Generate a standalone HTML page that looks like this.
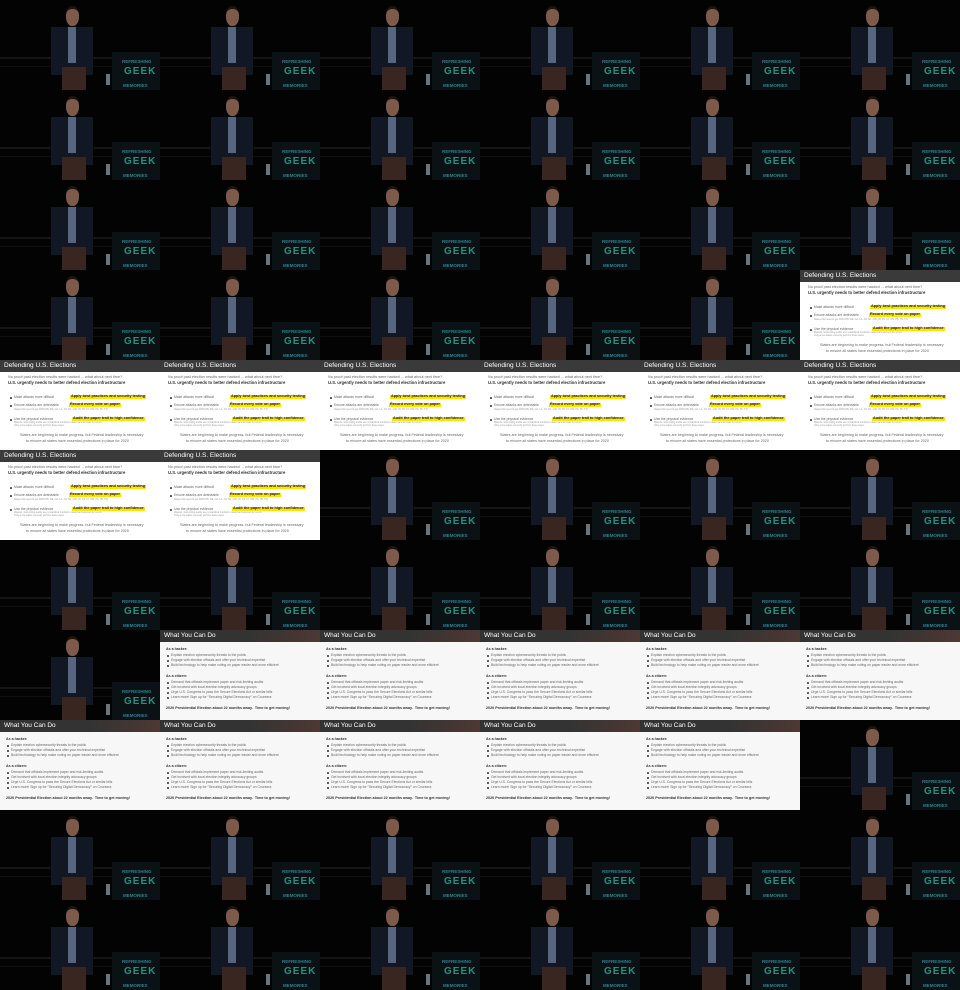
<!DOCTYPE html>
<html><head><meta charset="utf-8"><style>
*{margin:0;padding:0;box-sizing:border-box}
body{width:960px;height:990px;background:#000;overflow:hidden;font-family:"Liberation Sans",sans-serif}
.g{display:grid;grid-template-columns:repeat(6,160px);grid-auto-rows:90px}
.c{position:relative;width:160px;height:90px;overflow:hidden}
.s{background:
 linear-gradient(#566680,#566680) 68px 27px/8px 36px no-repeat,
 linear-gradient(#3a2620,#3a2620) 62px 67px/24px 23px no-repeat,
 linear-gradient(#121724,#121724) 51px 27px/42px 48px no-repeat,
 linear-gradient(#0a1215,#0a1215) 112px 52px/48px 38px no-repeat,
 linear-gradient(#6a747a,#6a747a) 106px 74px/4px 11px no-repeat,
 linear-gradient(#151515,#151515) 0 57px/112px 2px no-repeat,
 linear-gradient(#0e0e0e,#0e0e0e) 0 66px/112px 1px no-repeat,
 #030303}
.s::before{content:"";position:absolute;left:66px;top:6px;width:13px;height:17px;background:#7d5a4a;border-radius:45%;border-top:3px solid #1e140e}
.s b,.s u,.s em{position:absolute;font-weight:bold;font-style:normal;text-decoration:none;white-space:nowrap}
.s b{left:122px;top:59px;font-size:4.5px;color:#2e7f93}
.s u{left:124px;top:66px;font-size:10px;color:#2c8f7e;letter-spacing:1px}
.s em{left:123px;top:83px;font-size:4.5px;color:#2e7f93}
.d,.w{background:#fff;font-size:3.4px;color:#666;line-height:1}
.w{background:#f7f7f7}
.h{height:12px;background:#3a3a3a;color:#fff;font-size:6.5px;padding:3px 0 0 4px;white-space:nowrap}
.w .h{background:linear-gradient(90deg,#333 0,#333 55%,#4d3833 100%)}
.d p,.w p{position:absolute;white-space:nowrap}
.k{font-weight:bold;color:#333;font-size:4.2px}
.y{background:#fbe500;color:#222;font-weight:bold;font-size:3.8px;padding:0 1px}
.sm{font-size:2.4px;color:#999}
.d p.dt::before,.w p.dt::before{content:"";position:absolute;left:-4px;top:1px;width:1.6px;height:1.6px;background:#444;border-radius:50%}
</style></head><body><div class="g">
<div class="c s"><b>REFRESHING</b><u>GEEK</u><em>MEMORIES</em></div>
<div class="c s"><b>REFRESHING</b><u>GEEK</u><em>MEMORIES</em></div>
<div class="c s"><b>REFRESHING</b><u>GEEK</u><em>MEMORIES</em></div>
<div class="c s"><b>REFRESHING</b><u>GEEK</u><em>MEMORIES</em></div>
<div class="c s"><b>REFRESHING</b><u>GEEK</u><em>MEMORIES</em></div>
<div class="c s"><b>REFRESHING</b><u>GEEK</u><em>MEMORIES</em></div>

<div class="c s"><b>REFRESHING</b><u>GEEK</u><em>MEMORIES</em></div>
<div class="c s"><b>REFRESHING</b><u>GEEK</u><em>MEMORIES</em></div>
<div class="c s"><b>REFRESHING</b><u>GEEK</u><em>MEMORIES</em></div>
<div class="c s"><b>REFRESHING</b><u>GEEK</u><em>MEMORIES</em></div>
<div class="c s"><b>REFRESHING</b><u>GEEK</u><em>MEMORIES</em></div>
<div class="c s"><b>REFRESHING</b><u>GEEK</u><em>MEMORIES</em></div>

<div class="c s"><b>REFRESHING</b><u>GEEK</u><em>MEMORIES</em></div>
<div class="c s"><b>REFRESHING</b><u>GEEK</u><em>MEMORIES</em></div>
<div class="c s"><b>REFRESHING</b><u>GEEK</u><em>MEMORIES</em></div>
<div class="c s"><b>REFRESHING</b><u>GEEK</u><em>MEMORIES</em></div>
<div class="c s"><b>REFRESHING</b><u>GEEK</u><em>MEMORIES</em></div>
<div class="c s"><b>REFRESHING</b><u>GEEK</u><em>MEMORIES</em></div>

<div class="c s"><b>REFRESHING</b><u>GEEK</u><em>MEMORIES</em></div>
<div class="c s"><b>REFRESHING</b><u>GEEK</u><em>MEMORIES</em></div>
<div class="c s"><b>REFRESHING</b><u>GEEK</u><em>MEMORIES</em></div>
<div class="c s"><b>REFRESHING</b><u>GEEK</u><em>MEMORIES</em></div>
<div class="c s"><b>REFRESHING</b><u>GEEK</u><em>MEMORIES</em></div>
<div class="c d"><div class="h">Defending U.S. Elections</div><p style="left:8px;top:16px;font-size:3.8px">No proof past election results were hacked ... what about next time?</p><p class="k" style="left:8px;top:21px">U.S. urgently needs to better defend election infrastructure</p><p class="dt" style="left:14px;top:36px">Make attacks more difficult</p><p class="y" style="left:70px;top:35px">Apply best practices and security testing</p><p class="dt" style="left:14px;top:44px">Ensure attacks are detectable</p><p class="y" style="left:69px;top:43px">Record every vote on paper</p><p class="sm" style="left:14px;top:49px">States that need to get 100% PB: DE, GA, LA, NJ, SC, (AR, IN, KS, KY, MS, PA, TN, TX)</p><p class="dt" style="left:14px;top:58px">Use the physical evidence</p><p class="y" style="left:72px;top:57px">Audit the paper trail to high confidence</p><p class="sm" style="left:14px;top:62px">Manual, risk-limiting audits use a statistical method to detect and account for errors</p><p class="sm" style="left:14px;top:65px">Only a few states currently perform these steps</p><p style="left:20px;top:74px;font-size:3.7px">States are beginning to make progress, but Federal leadership is necessary</p><p style="left:26px;top:80px;font-size:3.7px">to ensure all states have essential protections in place for 2020</p></div>

<div class="c d"><div class="h">Defending U.S. Elections</div><p style="left:8px;top:16px;font-size:3.8px">No proof past election results were hacked ... what about next time?</p><p class="k" style="left:8px;top:21px">U.S. urgently needs to better defend election infrastructure</p><p class="dt" style="left:14px;top:36px">Make attacks more difficult</p><p class="y" style="left:70px;top:35px">Apply best practices and security testing</p><p class="dt" style="left:14px;top:44px">Ensure attacks are detectable</p><p class="y" style="left:69px;top:43px">Record every vote on paper</p><p class="sm" style="left:14px;top:49px">States that need to get 100% PB: DE, GA, LA, NJ, SC, (AR, IN, KS, KY, MS, PA, TN, TX)</p><p class="dt" style="left:14px;top:58px">Use the physical evidence</p><p class="y" style="left:72px;top:57px">Audit the paper trail to high confidence</p><p class="sm" style="left:14px;top:62px">Manual, risk-limiting audits use a statistical method to detect and account for errors</p><p class="sm" style="left:14px;top:65px">Only a few states currently perform these steps</p><p style="left:20px;top:74px;font-size:3.7px">States are beginning to make progress, but Federal leadership is necessary</p><p style="left:26px;top:80px;font-size:3.7px">to ensure all states have essential protections in place for 2020</p></div>
<div class="c d"><div class="h">Defending U.S. Elections</div><p style="left:8px;top:16px;font-size:3.8px">No proof past election results were hacked ... what about next time?</p><p class="k" style="left:8px;top:21px">U.S. urgently needs to better defend election infrastructure</p><p class="dt" style="left:14px;top:36px">Make attacks more difficult</p><p class="y" style="left:70px;top:35px">Apply best practices and security testing</p><p class="dt" style="left:14px;top:44px">Ensure attacks are detectable</p><p class="y" style="left:69px;top:43px">Record every vote on paper</p><p class="sm" style="left:14px;top:49px">States that need to get 100% PB: DE, GA, LA, NJ, SC, (AR, IN, KS, KY, MS, PA, TN, TX)</p><p class="dt" style="left:14px;top:58px">Use the physical evidence</p><p class="y" style="left:72px;top:57px">Audit the paper trail to high confidence</p><p class="sm" style="left:14px;top:62px">Manual, risk-limiting audits use a statistical method to detect and account for errors</p><p class="sm" style="left:14px;top:65px">Only a few states currently perform these steps</p><p style="left:20px;top:74px;font-size:3.7px">States are beginning to make progress, but Federal leadership is necessary</p><p style="left:26px;top:80px;font-size:3.7px">to ensure all states have essential protections in place for 2020</p></div>
<div class="c d"><div class="h">Defending U.S. Elections</div><p style="left:8px;top:16px;font-size:3.8px">No proof past election results were hacked ... what about next time?</p><p class="k" style="left:8px;top:21px">U.S. urgently needs to better defend election infrastructure</p><p class="dt" style="left:14px;top:36px">Make attacks more difficult</p><p class="y" style="left:70px;top:35px">Apply best practices and security testing</p><p class="dt" style="left:14px;top:44px">Ensure attacks are detectable</p><p class="y" style="left:69px;top:43px">Record every vote on paper</p><p class="sm" style="left:14px;top:49px">States that need to get 100% PB: DE, GA, LA, NJ, SC, (AR, IN, KS, KY, MS, PA, TN, TX)</p><p class="dt" style="left:14px;top:58px">Use the physical evidence</p><p class="y" style="left:72px;top:57px">Audit the paper trail to high confidence</p><p class="sm" style="left:14px;top:62px">Manual, risk-limiting audits use a statistical method to detect and account for errors</p><p class="sm" style="left:14px;top:65px">Only a few states currently perform these steps</p><p style="left:20px;top:74px;font-size:3.7px">States are beginning to make progress, but Federal leadership is necessary</p><p style="left:26px;top:80px;font-size:3.7px">to ensure all states have essential protections in place for 2020</p></div>
<div class="c d"><div class="h">Defending U.S. Elections</div><p style="left:8px;top:16px;font-size:3.8px">No proof past election results were hacked ... what about next time?</p><p class="k" style="left:8px;top:21px">U.S. urgently needs to better defend election infrastructure</p><p class="dt" style="left:14px;top:36px">Make attacks more difficult</p><p class="y" style="left:70px;top:35px">Apply best practices and security testing</p><p class="dt" style="left:14px;top:44px">Ensure attacks are detectable</p><p class="y" style="left:69px;top:43px">Record every vote on paper</p><p class="sm" style="left:14px;top:49px">States that need to get 100% PB: DE, GA, LA, NJ, SC, (AR, IN, KS, KY, MS, PA, TN, TX)</p><p class="dt" style="left:14px;top:58px">Use the physical evidence</p><p class="y" style="left:72px;top:57px">Audit the paper trail to high confidence</p><p class="sm" style="left:14px;top:62px">Manual, risk-limiting audits use a statistical method to detect and account for errors</p><p class="sm" style="left:14px;top:65px">Only a few states currently perform these steps</p><p style="left:20px;top:74px;font-size:3.7px">States are beginning to make progress, but Federal leadership is necessary</p><p style="left:26px;top:80px;font-size:3.7px">to ensure all states have essential protections in place for 2020</p></div>
<div class="c d"><div class="h">Defending U.S. Elections</div><p style="left:8px;top:16px;font-size:3.8px">No proof past election results were hacked ... what about next time?</p><p class="k" style="left:8px;top:21px">U.S. urgently needs to better defend election infrastructure</p><p class="dt" style="left:14px;top:36px">Make attacks more difficult</p><p class="y" style="left:70px;top:35px">Apply best practices and security testing</p><p class="dt" style="left:14px;top:44px">Ensure attacks are detectable</p><p class="y" style="left:69px;top:43px">Record every vote on paper</p><p class="sm" style="left:14px;top:49px">States that need to get 100% PB: DE, GA, LA, NJ, SC, (AR, IN, KS, KY, MS, PA, TN, TX)</p><p class="dt" style="left:14px;top:58px">Use the physical evidence</p><p class="y" style="left:72px;top:57px">Audit the paper trail to high confidence</p><p class="sm" style="left:14px;top:62px">Manual, risk-limiting audits use a statistical method to detect and account for errors</p><p class="sm" style="left:14px;top:65px">Only a few states currently perform these steps</p><p style="left:20px;top:74px;font-size:3.7px">States are beginning to make progress, but Federal leadership is necessary</p><p style="left:26px;top:80px;font-size:3.7px">to ensure all states have essential protections in place for 2020</p></div>
<div class="c d"><div class="h">Defending U.S. Elections</div><p style="left:8px;top:16px;font-size:3.8px">No proof past election results were hacked ... what about next time?</p><p class="k" style="left:8px;top:21px">U.S. urgently needs to better defend election infrastructure</p><p class="dt" style="left:14px;top:36px">Make attacks more difficult</p><p class="y" style="left:70px;top:35px">Apply best practices and security testing</p><p class="dt" style="left:14px;top:44px">Ensure attacks are detectable</p><p class="y" style="left:69px;top:43px">Record every vote on paper</p><p class="sm" style="left:14px;top:49px">States that need to get 100% PB: DE, GA, LA, NJ, SC, (AR, IN, KS, KY, MS, PA, TN, TX)</p><p class="dt" style="left:14px;top:58px">Use the physical evidence</p><p class="y" style="left:72px;top:57px">Audit the paper trail to high confidence</p><p class="sm" style="left:14px;top:62px">Manual, risk-limiting audits use a statistical method to detect and account for errors</p><p class="sm" style="left:14px;top:65px">Only a few states currently perform these steps</p><p style="left:20px;top:74px;font-size:3.7px">States are beginning to make progress, but Federal leadership is necessary</p><p style="left:26px;top:80px;font-size:3.7px">to ensure all states have essential protections in place for 2020</p></div>

<div class="c d"><div class="h">Defending U.S. Elections</div><p style="left:8px;top:16px;font-size:3.8px">No proof past election results were hacked ... what about next time?</p><p class="k" style="left:8px;top:21px">U.S. urgently needs to better defend election infrastructure</p><p class="dt" style="left:14px;top:36px">Make attacks more difficult</p><p class="y" style="left:70px;top:35px">Apply best practices and security testing</p><p class="dt" style="left:14px;top:44px">Ensure attacks are detectable</p><p class="y" style="left:69px;top:43px">Record every vote on paper</p><p class="sm" style="left:14px;top:49px">States that need to get 100% PB: DE, GA, LA, NJ, SC, (AR, IN, KS, KY, MS, PA, TN, TX)</p><p class="dt" style="left:14px;top:58px">Use the physical evidence</p><p class="y" style="left:72px;top:57px">Audit the paper trail to high confidence</p><p class="sm" style="left:14px;top:62px">Manual, risk-limiting audits use a statistical method to detect and account for errors</p><p class="sm" style="left:14px;top:65px">Only a few states currently perform these steps</p><p style="left:20px;top:74px;font-size:3.7px">States are beginning to make progress, but Federal leadership is necessary</p><p style="left:26px;top:80px;font-size:3.7px">to ensure all states have essential protections in place for 2020</p></div>
<div class="c d"><div class="h">Defending U.S. Elections</div><p style="left:8px;top:16px;font-size:3.8px">No proof past election results were hacked ... what about next time?</p><p class="k" style="left:8px;top:21px">U.S. urgently needs to better defend election infrastructure</p><p class="dt" style="left:14px;top:36px">Make attacks more difficult</p><p class="y" style="left:70px;top:35px">Apply best practices and security testing</p><p class="dt" style="left:14px;top:44px">Ensure attacks are detectable</p><p class="y" style="left:69px;top:43px">Record every vote on paper</p><p class="sm" style="left:14px;top:49px">States that need to get 100% PB: DE, GA, LA, NJ, SC, (AR, IN, KS, KY, MS, PA, TN, TX)</p><p class="dt" style="left:14px;top:58px">Use the physical evidence</p><p class="y" style="left:72px;top:57px">Audit the paper trail to high confidence</p><p class="sm" style="left:14px;top:62px">Manual, risk-limiting audits use a statistical method to detect and account for errors</p><p class="sm" style="left:14px;top:65px">Only a few states currently perform these steps</p><p style="left:20px;top:74px;font-size:3.7px">States are beginning to make progress, but Federal leadership is necessary</p><p style="left:26px;top:80px;font-size:3.7px">to ensure all states have essential protections in place for 2020</p></div>
<div class="c s"><b>REFRESHING</b><u>GEEK</u><em>MEMORIES</em></div>
<div class="c s"><b>REFRESHING</b><u>GEEK</u><em>MEMORIES</em></div>
<div class="c s"><b>REFRESHING</b><u>GEEK</u><em>MEMORIES</em></div>
<div class="c s"><b>REFRESHING</b><u>GEEK</u><em>MEMORIES</em></div>

<div class="c s"><b>REFRESHING</b><u>GEEK</u><em>MEMORIES</em></div>
<div class="c s"><b>REFRESHING</b><u>GEEK</u><em>MEMORIES</em></div>
<div class="c s"><b>REFRESHING</b><u>GEEK</u><em>MEMORIES</em></div>
<div class="c s"><b>REFRESHING</b><u>GEEK</u><em>MEMORIES</em></div>
<div class="c s"><b>REFRESHING</b><u>GEEK</u><em>MEMORIES</em></div>
<div class="c s"><b>REFRESHING</b><u>GEEK</u><em>MEMORIES</em></div>

<div class="c s"><b>REFRESHING</b><u>GEEK</u><em>MEMORIES</em></div>
<div class="c w"><div class="h">What You Can Do</div><p class="k" style="left:6px;top:18px;font-size:3.6px">As a hacker:</p><p class="dt" style="left:11px;top:24px">Explain election cybersecurity threats to the public</p><p class="dt" style="left:11px;top:29px">Engage with election officials and offer your technical expertise</p><p class="dt" style="left:11px;top:34px">Build technology to help make voting on paper easier and more efficient</p><p class="k" style="left:6px;top:45px;font-size:3.6px">As a citizen:</p><p class="dt" style="left:11px;top:51px">Demand that officials implement paper and risk-limiting audits</p><p class="dt" style="left:11px;top:56px">Get involved with local election integrity advocacy groups</p><p class="dt" style="left:11px;top:61px">Urge U.S. Congress to pass the Secure Elections Act or similar bills</p><p class="dt" style="left:11px;top:66px">Learn more! Sign up for "Securing Digital Democracy" on Coursera</p><p class="k" style="left:6px;top:77px;font-size:3.7px">2020 Presidential Election about 22 months away.&nbsp; Time to get moving!</p></div>
<div class="c w"><div class="h">What You Can Do</div><p class="k" style="left:6px;top:18px;font-size:3.6px">As a hacker:</p><p class="dt" style="left:11px;top:24px">Explain election cybersecurity threats to the public</p><p class="dt" style="left:11px;top:29px">Engage with election officials and offer your technical expertise</p><p class="dt" style="left:11px;top:34px">Build technology to help make voting on paper easier and more efficient</p><p class="k" style="left:6px;top:45px;font-size:3.6px">As a citizen:</p><p class="dt" style="left:11px;top:51px">Demand that officials implement paper and risk-limiting audits</p><p class="dt" style="left:11px;top:56px">Get involved with local election integrity advocacy groups</p><p class="dt" style="left:11px;top:61px">Urge U.S. Congress to pass the Secure Elections Act or similar bills</p><p class="dt" style="left:11px;top:66px">Learn more! Sign up for "Securing Digital Democracy" on Coursera</p><p class="k" style="left:6px;top:77px;font-size:3.7px">2020 Presidential Election about 22 months away.&nbsp; Time to get moving!</p></div>
<div class="c w"><div class="h">What You Can Do</div><p class="k" style="left:6px;top:18px;font-size:3.6px">As a hacker:</p><p class="dt" style="left:11px;top:24px">Explain election cybersecurity threats to the public</p><p class="dt" style="left:11px;top:29px">Engage with election officials and offer your technical expertise</p><p class="dt" style="left:11px;top:34px">Build technology to help make voting on paper easier and more efficient</p><p class="k" style="left:6px;top:45px;font-size:3.6px">As a citizen:</p><p class="dt" style="left:11px;top:51px">Demand that officials implement paper and risk-limiting audits</p><p class="dt" style="left:11px;top:56px">Get involved with local election integrity advocacy groups</p><p class="dt" style="left:11px;top:61px">Urge U.S. Congress to pass the Secure Elections Act or similar bills</p><p class="dt" style="left:11px;top:66px">Learn more! Sign up for "Securing Digital Democracy" on Coursera</p><p class="k" style="left:6px;top:77px;font-size:3.7px">2020 Presidential Election about 22 months away.&nbsp; Time to get moving!</p></div>
<div class="c w"><div class="h">What You Can Do</div><p class="k" style="left:6px;top:18px;font-size:3.6px">As a hacker:</p><p class="dt" style="left:11px;top:24px">Explain election cybersecurity threats to the public</p><p class="dt" style="left:11px;top:29px">Engage with election officials and offer your technical expertise</p><p class="dt" style="left:11px;top:34px">Build technology to help make voting on paper easier and more efficient</p><p class="k" style="left:6px;top:45px;font-size:3.6px">As a citizen:</p><p class="dt" style="left:11px;top:51px">Demand that officials implement paper and risk-limiting audits</p><p class="dt" style="left:11px;top:56px">Get involved with local election integrity advocacy groups</p><p class="dt" style="left:11px;top:61px">Urge U.S. Congress to pass the Secure Elections Act or similar bills</p><p class="dt" style="left:11px;top:66px">Learn more! Sign up for "Securing Digital Democracy" on Coursera</p><p class="k" style="left:6px;top:77px;font-size:3.7px">2020 Presidential Election about 22 months away.&nbsp; Time to get moving!</p></div>
<div class="c w"><div class="h">What You Can Do</div><p class="k" style="left:6px;top:18px;font-size:3.6px">As a hacker:</p><p class="dt" style="left:11px;top:24px">Explain election cybersecurity threats to the public</p><p class="dt" style="left:11px;top:29px">Engage with election officials and offer your technical expertise</p><p class="dt" style="left:11px;top:34px">Build technology to help make voting on paper easier and more efficient</p><p class="k" style="left:6px;top:45px;font-size:3.6px">As a citizen:</p><p class="dt" style="left:11px;top:51px">Demand that officials implement paper and risk-limiting audits</p><p class="dt" style="left:11px;top:56px">Get involved with local election integrity advocacy groups</p><p class="dt" style="left:11px;top:61px">Urge U.S. Congress to pass the Secure Elections Act or similar bills</p><p class="dt" style="left:11px;top:66px">Learn more! Sign up for "Securing Digital Democracy" on Coursera</p><p class="k" style="left:6px;top:77px;font-size:3.7px">2020 Presidential Election about 22 months away.&nbsp; Time to get moving!</p></div>

<div class="c w"><div class="h">What You Can Do</div><p class="k" style="left:6px;top:18px;font-size:3.6px">As a hacker:</p><p class="dt" style="left:11px;top:24px">Explain election cybersecurity threats to the public</p><p class="dt" style="left:11px;top:29px">Engage with election officials and offer your technical expertise</p><p class="dt" style="left:11px;top:34px">Build technology to help make voting on paper easier and more efficient</p><p class="k" style="left:6px;top:45px;font-size:3.6px">As a citizen:</p><p class="dt" style="left:11px;top:51px">Demand that officials implement paper and risk-limiting audits</p><p class="dt" style="left:11px;top:56px">Get involved with local election integrity advocacy groups</p><p class="dt" style="left:11px;top:61px">Urge U.S. Congress to pass the Secure Elections Act or similar bills</p><p class="dt" style="left:11px;top:66px">Learn more! Sign up for "Securing Digital Democracy" on Coursera</p><p class="k" style="left:6px;top:77px;font-size:3.7px">2020 Presidential Election about 22 months away.&nbsp; Time to get moving!</p></div>
<div class="c w"><div class="h">What You Can Do</div><p class="k" style="left:6px;top:18px;font-size:3.6px">As a hacker:</p><p class="dt" style="left:11px;top:24px">Explain election cybersecurity threats to the public</p><p class="dt" style="left:11px;top:29px">Engage with election officials and offer your technical expertise</p><p class="dt" style="left:11px;top:34px">Build technology to help make voting on paper easier and more efficient</p><p class="k" style="left:6px;top:45px;font-size:3.6px">As a citizen:</p><p class="dt" style="left:11px;top:51px">Demand that officials implement paper and risk-limiting audits</p><p class="dt" style="left:11px;top:56px">Get involved with local election integrity advocacy groups</p><p class="dt" style="left:11px;top:61px">Urge U.S. Congress to pass the Secure Elections Act or similar bills</p><p class="dt" style="left:11px;top:66px">Learn more! Sign up for "Securing Digital Democracy" on Coursera</p><p class="k" style="left:6px;top:77px;font-size:3.7px">2020 Presidential Election about 22 months away.&nbsp; Time to get moving!</p></div>
<div class="c w"><div class="h">What You Can Do</div><p class="k" style="left:6px;top:18px;font-size:3.6px">As a hacker:</p><p class="dt" style="left:11px;top:24px">Explain election cybersecurity threats to the public</p><p class="dt" style="left:11px;top:29px">Engage with election officials and offer your technical expertise</p><p class="dt" style="left:11px;top:34px">Build technology to help make voting on paper easier and more efficient</p><p class="k" style="left:6px;top:45px;font-size:3.6px">As a citizen:</p><p class="dt" style="left:11px;top:51px">Demand that officials implement paper and risk-limiting audits</p><p class="dt" style="left:11px;top:56px">Get involved with local election integrity advocacy groups</p><p class="dt" style="left:11px;top:61px">Urge U.S. Congress to pass the Secure Elections Act or similar bills</p><p class="dt" style="left:11px;top:66px">Learn more! Sign up for "Securing Digital Democracy" on Coursera</p><p class="k" style="left:6px;top:77px;font-size:3.7px">2020 Presidential Election about 22 months away.&nbsp; Time to get moving!</p></div>
<div class="c w"><div class="h">What You Can Do</div><p class="k" style="left:6px;top:18px;font-size:3.6px">As a hacker:</p><p class="dt" style="left:11px;top:24px">Explain election cybersecurity threats to the public</p><p class="dt" style="left:11px;top:29px">Engage with election officials and offer your technical expertise</p><p class="dt" style="left:11px;top:34px">Build technology to help make voting on paper easier and more efficient</p><p class="k" style="left:6px;top:45px;font-size:3.6px">As a citizen:</p><p class="dt" style="left:11px;top:51px">Demand that officials implement paper and risk-limiting audits</p><p class="dt" style="left:11px;top:56px">Get involved with local election integrity advocacy groups</p><p class="dt" style="left:11px;top:61px">Urge U.S. Congress to pass the Secure Elections Act or similar bills</p><p class="dt" style="left:11px;top:66px">Learn more! Sign up for "Securing Digital Democracy" on Coursera</p><p class="k" style="left:6px;top:77px;font-size:3.7px">2020 Presidential Election about 22 months away.&nbsp; Time to get moving!</p></div>
<div class="c w"><div class="h">What You Can Do</div><p class="k" style="left:6px;top:18px;font-size:3.6px">As a hacker:</p><p class="dt" style="left:11px;top:24px">Explain election cybersecurity threats to the public</p><p class="dt" style="left:11px;top:29px">Engage with election officials and offer your technical expertise</p><p class="dt" style="left:11px;top:34px">Build technology to help make voting on paper easier and more efficient</p><p class="k" style="left:6px;top:45px;font-size:3.6px">As a citizen:</p><p class="dt" style="left:11px;top:51px">Demand that officials implement paper and risk-limiting audits</p><p class="dt" style="left:11px;top:56px">Get involved with local election integrity advocacy groups</p><p class="dt" style="left:11px;top:61px">Urge U.S. Congress to pass the Secure Elections Act or similar bills</p><p class="dt" style="left:11px;top:66px">Learn more! Sign up for "Securing Digital Democracy" on Coursera</p><p class="k" style="left:6px;top:77px;font-size:3.7px">2020 Presidential Election about 22 months away.&nbsp; Time to get moving!</p></div>
<div class="c s"><b>REFRESHING</b><u>GEEK</u><em>MEMORIES</em></div>

<div class="c s"><b>REFRESHING</b><u>GEEK</u><em>MEMORIES</em></div>
<div class="c s"><b>REFRESHING</b><u>GEEK</u><em>MEMORIES</em></div>
<div class="c s"><b>REFRESHING</b><u>GEEK</u><em>MEMORIES</em></div>
<div class="c s"><b>REFRESHING</b><u>GEEK</u><em>MEMORIES</em></div>
<div class="c s"><b>REFRESHING</b><u>GEEK</u><em>MEMORIES</em></div>
<div class="c s"><b>REFRESHING</b><u>GEEK</u><em>MEMORIES</em></div>

<div class="c s"><b>REFRESHING</b><u>GEEK</u><em>MEMORIES</em></div>
<div class="c s"><b>REFRESHING</b><u>GEEK</u><em>MEMORIES</em></div>
<div class="c s"><b>REFRESHING</b><u>GEEK</u><em>MEMORIES</em></div>
<div class="c s"><b>REFRESHING</b><u>GEEK</u><em>MEMORIES</em></div>
<div class="c s"><b>REFRESHING</b><u>GEEK</u><em>MEMORIES</em></div>
<div class="c s"><b>REFRESHING</b><u>GEEK</u><em>MEMORIES</em></div>
</div></body></html>
